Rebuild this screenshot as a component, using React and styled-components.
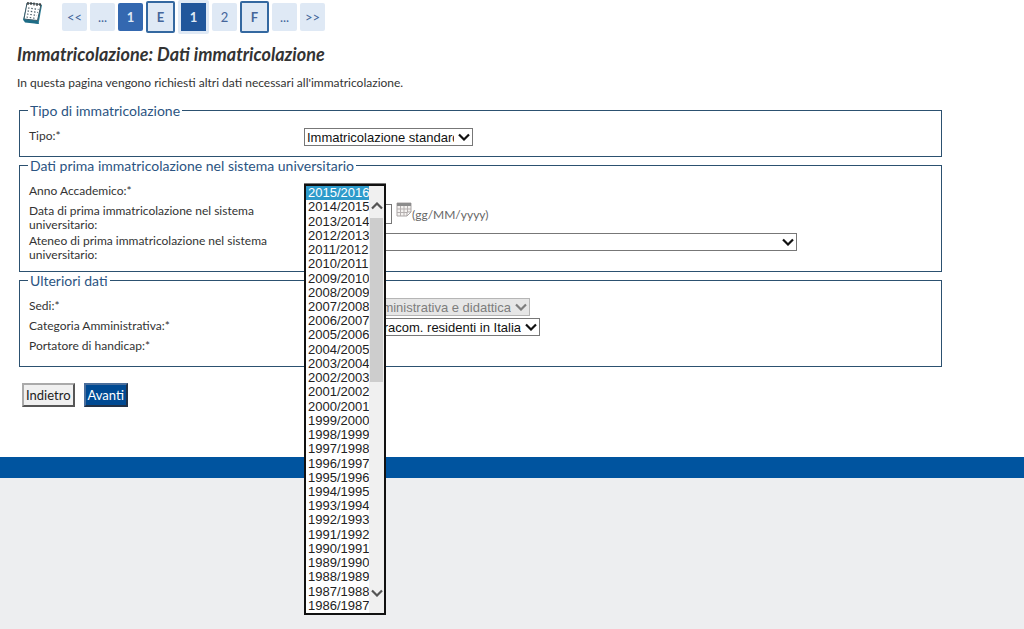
import { useState } from "react";
import styled, { createGlobalStyle } from "styled-components";

const steps = [
  { label: "<<" },
  { label: "..." },
  { label: "1", kind: "done" },
  { label: "E", kind: "outlined" },
  { label: "1", kind: "current" },
  { label: "2" },
  { label: "F", kind: "outlined" },
  { label: "..." },
  { label: ">>" },
];

const years = Array.from({ length: 30 }, (_, i) => `${2015 - i}/${2016 - i}`);

const Chevron = ({ up }) => (
  <svg width="12" height="8" viewBox="0 0 12 8" fill="none" aria-hidden="true">
    <path
      d={up ? "M1 6.5 6 1.5 11 6.5" : "M1 1.5 6 6.5 11 1.5"}
      stroke="currentColor"
      strokeWidth="2.2"
    />
  </svg>
);

const NotepadIcon = () => (
  <svg width="22" height="26" viewBox="0 0 22 26" aria-hidden="true">
    <path d="M5 3 20 5 16.500 24 1 20Z" fill="#2c7f97" />
    <path d="M5 3 19 4.500 15.500 20.500 2 19Z" fill="#fff" stroke="#3b5663" strokeWidth="1" />
    <path d="M1 19.500 15.500 21 17 24 3 22.500Z" fill="#1d6c86" />
    <path
      d="M6 2v3M9 2v3M12 2.500v3M15 3v3M18 3v3"
      stroke="#333"
      strokeWidth="1.200"
    />
    <path
      d="M6 8 16.500 9.500M5.500 11 16 12.500M5 14 15 15.500M4.500 17 14 18.500"
      stroke="#4a5d66"
      strokeWidth="1.200"
      strokeDasharray="1.500 1.800"
    />
  </svg>
);

const CalendarIcon = () => (
  <svg width="16" height="15" viewBox="0 0 16 15" aria-hidden="true">
    <path d="M1 1h14v9l-4 4H1Z" fill="#f4f2f0" stroke="#aaa5a5" />
    <path d="M1 1h14v3H1Z" fill="#8c8c8c" />
    <path d="M1 7h14M1 10.500h14M4.500 4v10M8 4v10M11.500 4v10" stroke="#b5b0b0" />
    <path d="M15 10h-4v4Z" fill="#fff" stroke="#aaa5a5" />
  </svg>
);

const SelectField = ({ id, label, value, width, disabled, alignEnd }) => (
  <Row>
    <Label htmlFor={id}>{label}</Label>
    <SelectWrap $width={width} $disabled={disabled}>
      <Select id={id} disabled={disabled} $alignEnd={alignEnd}>
        <option>{value}</option>
      </Select>
      <Chevron />
    </SelectWrap>
  </Row>
);

const YearField = () => {
  const [year, setYear] = useState(years[0]);

  return (
    <Row>
      <Label htmlFor="anno">Anno Accademico:*</Label>
      <YearWrap>
        <SelectWrap $width="82px">
          <Select id="anno" value={year} onChange={(e) => setYear(e.target.value)}>
            {years.map((y) => (
              <option key={y}>{y}</option>
            ))}
          </Select>
          <Chevron />
        </SelectWrap>
        <YearPopup>
          <YearList role="listbox" aria-label="Anno Accademico">
            {years.map((y) => (
              <Year
                key={y}
                role="option"
                aria-selected={y === year}
                $selected={y === year}
                onClick={() => setYear(y)}
              >
                {y}
              </Year>
            ))}
          </YearList>
          <ScrollBar>
            <Chevron up />
            <Thumb />
            <Chevron />
          </ScrollBar>
        </YearPopup>
      </YearWrap>
    </Row>
  );
};

const App = () => {
  return (
    <>
      <GlobalStyle />
      <Page>
        <Content>
          <Steps aria-label="Fasi">
            <IconLink href="#" aria-label="Checklist">
              <NotepadIcon />
            </IconLink>
            {steps.map((s, i) => (
              <Step key={i} href="#" $kind={s.kind}>
                {s.label}
              </Step>
            ))}
          </Steps>
          <Title>Immatricolazione: Dati immatricolazione</Title>
          <Intro>
            In questa pagina vengono richiesti altri dati necessari
            all'immatricolazione.
          </Intro>
          <form onSubmit={(e) => e.preventDefault()}>
            <Group>
              <Legend>Tipo di immatricolazione</Legend>
              <SelectField id="tipo" label="Tipo:*" value="Immatricolazione standard" width="169px" />
            </Group>
            <Group>
              <Legend>Dati prima immatricolazione nel sistema universitario</Legend>
              <YearField />
              <Row>
                <Label htmlFor="data">
                  Data di prima immatricolazione nel sistema universitario:
                </Label>
                <DateWrap>
                  <DateInput id="data" type="text" />
                  <CalendarIcon />
                  <Hint>(gg/MM/yyyy)</Hint>
                </DateWrap>
              </Row>
              <SelectField
                id="ateneo"
                label="Ateneo di prima immatricolazione nel sistema universitario:"
                value=""
                width="493px"
              />
            </Group>
            <Group>
              <Legend>Ulteriori dati</Legend>
              <SelectField
                id="sedi"
                label="Sedi:*"
                value="Sede amministrativa e didattica"
                width="226px"
                disabled
                alignEnd
              />
              <SelectField
                id="categoria"
                label="Categoria Amministrativa:*"
                value="Studenti extracom. residenti in Italia"
                width="236px"
                alignEnd
              />
              <SelectField id="handicap" label="Portatore di handicap:*" value="No" width="48px" />
            </Group>
            <Buttons>
              <Button type="button">Indietro</Button>
              <Button type="submit" $primary>
                Avanti
              </Button>
            </Buttons>
          </form>
        </Content>
        <Footer />
      </Page>
    </>
  );
};

const GlobalStyle = createGlobalStyle`
  * {
    box-sizing: border-box;
  }
  body {
    margin: 0;
    background: #fff;
    color: #333;
    font-family: Lato, "Open Sans", sans-serif;
    font-size: 12px;
  }
`;

const Page = styled.div`
  min-height: 100vh;
  display: flex;
  flex-direction: column;
`;

const Content = styled.main`
  width: 92%;
  padding: 0 0 50px 17px;
`;

const Steps = styled.nav`
  display: flex;
  align-items: center;
  gap: 3px;
  height: 34px;
`;

const IconLink = styled.a`
  display: flex;
  width: 42px;
  height: 34px;
  padding-left: 5px;
`;

const Step = styled.a`
  display: flex;
  justify-content: center;
  align-items: center;
  width: 25px;
  height: 28px;
  border-radius: 2px;
  background: #dfe9f5;
  color: #44659a;
  font-size: 13px;
  text-decoration: none;

  ${({ $kind }) =>
    $kind === "done" && "background: #3468b0; color: #dfe9f5; font-weight: bold;"}
  ${({ $kind }) =>
    $kind === "outlined" &&
    "width: 29px; height: 32px; border: 2px solid #3468a0; font-weight: bold;"}
  ${({ $kind }) =>
    $kind === "current" &&
    "width: 31px; height: 34px; border: 3px solid #dfe9f5; background: #20569b; color: #dfe9f5; font-weight: bold;"}
`;

const Title = styled.h1`
  margin: 8px 0 0;
  font-size: 18px;
  line-height: 24px;
  font-style: italic;
`;

const Intro = styled.p`
  margin: 8px 0 11px;
  line-height: 17px;
`;

const Group = styled.fieldset`
  margin: 0 0 0 2px;
  padding: 8px 9px 9px;
  border: 1px solid #2c5170;
`;

const Legend = styled.legend`
  margin-left: -1px;
  padding: 0 2px;
  color: #2b5482;
  font-size: 14px;
  line-height: 17px;
`;

const Row = styled.div`
  display: grid;
  grid-template-columns: 275px 1fr;
  align-items: start;
  min-height: 20px;
`;

const Label = styled.label`
  padding: 2px 24px 0 0;
  line-height: 14px;
`;

const SelectWrap = styled.div`
  display: grid;
  align-items: center;
  width: ${({ $width }) => $width};
  margin-top: 1px;
  color: ${({ $disabled }) => ($disabled ? "#7d7d7d" : "#111")};

  & > * {
    grid-area: 1 / 1;
  }
  & > svg {
    justify-self: end;
    margin-right: 3px;
    pointer-events: none;
  }
`;

const Select = styled.select`
  appearance: none;
  width: 100%;
  height: 18px;
  padding: 0 18px 0 2px;
  border: 1px solid #777;
  border-radius: 0;
  background: #fff;
  color: inherit;
  font-family: "Liberation Sans", Arial, sans-serif;
  font-size: 13px;
  text-align-last: ${({ $alignEnd }) => ($alignEnd ? "right" : "left")};

  &:disabled {
    border-color: #b5b5b5;
    background: #e6e6e6;
    opacity: 1;
  }
`;

const YearWrap = styled.div`
  position: relative;
`;

/* open drop-down, lies over the rest of the form */
const YearPopup = styled.div`
  position: absolute;
  top: 2px;
  left: 0;
  z-index: 1;
  display: flex;
  width: 82px;
  height: 431px;
  border: 2px solid #111;
  background: #fff;
`;

const YearList = styled.ul`
  flex: 1;
  display: grid;
  grid-auto-rows: 1fr;
  margin: 0;
  padding: 0;
  list-style: none;
  font-family: "Liberation Sans", Arial, sans-serif;
`;

const Year = styled.li`
  display: flex;
  align-items: center;
  padding-left: 2px;
  font-size: 13px;
  line-height: 14px;
  background: ${({ $selected }) => ($selected ? "#2e9bcb" : "#fff")};
  color: ${({ $selected }) => ($selected ? "#fff" : "#222")};
  cursor: default;
`;

const ScrollBar = styled.div`
  display: flex;
  flex-direction: column;
  align-items: center;
  width: 15px;
  padding: 16px 0;
  background: #f0f0f0;
  color: #555;

  & > svg:last-child {
    margin-top: auto;
  }
`;

const Thumb = styled.div`
  width: 13px;
  height: 164px;
  margin-top: 8px;
  background: #cdcdcd;
`;

const DateWrap = styled.div`
  display: flex;
  align-items: flex-start;
  gap: 4px;
`;

const DateInput = styled.input`
  width: 88px;
  height: 20px;
  margin-top: 2px;
  border: 1px solid #777;
`;

const Hint = styled.span`
  margin: 6px 0 0 -4px;
  color: #666;
  line-height: 14px;
`;

const Buttons = styled.div`
  display: flex;
  gap: 9px;
  margin: 16px 0 0 5px;
`;

const Button = styled.button`
  height: 24px;
  padding: 0 2px;
  border: 2px outset ${({ $primary }) => ($primary ? "#4a6e9c" : "#aaa")};
  background: ${({ $primary }) => ($primary ? "#004a93" : "#f0f0f0")};
  color: ${({ $primary }) => ($primary ? "#fff" : "#222")};
  font-family: inherit;
  font-size: 13px;
`;

const Footer = styled.footer`
  flex: 1;
  border-top: 21px solid #00549f;
  background: #edeef0;
`;

export default App;
